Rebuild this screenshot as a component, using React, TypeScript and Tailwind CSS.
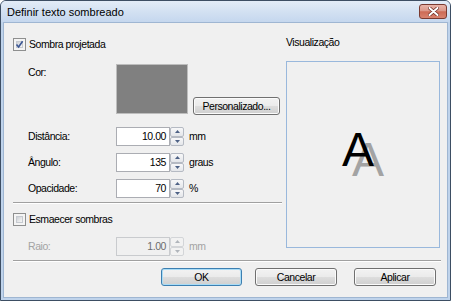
import React from 'react';

const txt = 'text-[10.5px] tracking-[-0.45px] leading-[13px]';

function CheckBox({ checked }: { checked?: boolean }) {
  return (
    <span className="w-[13px] h-[13px] shrink-0 border border-[#8e8f8f] bg-[#f4f4f4] p-[2px] flex">
      <span className="flex-1 flex items-center justify-center bg-[linear-gradient(135deg,#cbcfd5_0%,#e8e9ea_60%,#f6f6f6_100%)] border border-[#c6cad0]">
        {checked && (
          <svg width="9" height="9" viewBox="0 0 9 9" className="-m-[2px]">
            <path d="M1.5 4.5 L3.6 7 L7.6 1.2" fill="none" stroke="#3b5694" strokeWidth="1.6" />
          </svg>
        )}
      </span>
    </span>
  );
}

function Spin({ disabled }: { disabled?: boolean }) {
  const arrow = disabled ? '#b0b5bb' : '#4d6185';
  const half = `flex-1 flex items-center justify-center rounded-[2px] border ${
    disabled ? 'border-[#d3d5d8] bg-[#f2f2f2]' : 'border-[#b5bac3] bg-[linear-gradient(180deg,#f8f8f9_0%,#e4e6ea_100%)]'
  }`;
  return (
    <div className="w-[14px] h-[19px] flex flex-col">
      <div className={half}>
        <svg width="5" height="3" viewBox="0 0 5 3">
          <path d="M0 3 L2.5 0 L5 3Z" fill={arrow} />
        </svg>
      </div>
      <div className={half}>
        <svg width="5" height="3" viewBox="0 0 5 3">
          <path d="M0 0 L2.5 3 L5 0Z" fill={arrow} />
        </svg>
      </div>
    </div>
  );
}

function NumRow({
  label,
  value,
  unit,
  disabled,
  className,
}: {
  label: string;
  value: string;
  unit: string;
  disabled?: boolean;
  className?: string;
}) {
  return (
    <div className={`flex items-center h-[19px] ${className ?? ''}`}>
      <div className={`w-[103px] pl-[15px] ${txt} ${disabled ? 'text-[#a3a3a3]' : ''}`}>{label}</div>
      <div
        className={`w-[54px] h-[19px] border flex items-center justify-end pr-[3px] ${txt} ${
          disabled ? 'border-[#c9cbce] bg-[#f0f0f0] text-[#6d6d6d]' : 'border-[#abadb3] bg-white'
        }`}
      >
        {value}
      </div>
      <Spin disabled={disabled} />
      <div className={`ml-[5px] ${txt} ${disabled ? 'text-[#a3a3a3]' : ''}`}>{unit}</div>
    </div>
  );
}

function Btn({ children, def, className }: { children: React.ReactNode; def?: boolean; className?: string }) {
  return (
    <div
      className={`h-[18px] rounded-[3px] border flex items-center justify-center ${txt} bg-[linear-gradient(180deg,#f2f2f2_0%,#ebebeb_48%,#dddddd_52%,#cfcfcf_100%)] ${
        def
          ? 'border-[#3c7fb1] shadow-[inset_0_0_0_1px_#a9dcf6]'
          : 'border-[#707070] shadow-[inset_0_0_0_1px_#fbfbfb]'
      } ${className ?? ''}`}
    >
      {children}
    </div>
  );
}

export default function App() {
  return (
    <div className="w-[451px] h-[301px] flex flex-col rounded-t-[6px] border border-[#3d4e63] bg-[#bfd3eb] font-['Liberation_Sans',Arial,sans-serif] text-black overflow-hidden">
      {/* Title bar */}
      <div className="h-[21px] shrink-0 flex items-center justify-between pl-[6px] pr-[3px] bg-[linear-gradient(180deg,#e3ecf7_0%,#d3e1f2_50%,#c5d7ee_100%)]">
        <span className="text-[11px] leading-[13px] pt-[1px]">Definir texto sombreado</span>
        <div className="w-[28px] h-[15px] rounded-[3px] border border-[#7a3a30] bg-[linear-gradient(180deg,#e9b4a8_0%,#dc988a_45%,#cd6a55_52%,#d9836f_100%)] flex items-center justify-center">
          <svg width="11" height="9" viewBox="0 0 11 9">
            <path d="M1.5 1 L9.5 8 M9.5 1 L1.5 8" stroke="#6a2a22" strokeWidth="3.4" strokeLinecap="round" />
            <path d="M1.5 1 L9.5 8 M9.5 1 L1.5 8" stroke="#ffffff" strokeWidth="2" strokeLinecap="round" />
          </svg>
        </div>
      </div>

      {/* Client area */}
      <div className="flex-1 mx-[2px] mb-[2px] border border-[#9fb6d2] bg-[#f0f0f0] flex flex-col">
        <div className="flex items-start">
          {/* Left column */}
          <div className="ml-[9px] w-[269px] pt-[15px] flex flex-col">
            <div className="flex items-center h-[13px] gap-[3px]">
              <CheckBox checked />
              <span className={txt}>Sombra projetada</span>
            </div>

            <div className="flex items-start mt-[13px]">
              <div className={`w-[103px] pl-[15px] pt-[2px] ${txt}`}>Cor:</div>
              <div className="w-[72px] h-[50px] border border-[#bdbdbd] bg-[#808080]" />
              <Btn className="ml-[5px] w-[87px] self-end -mb-[1px]">Personalizado...</Btn>
            </div>

            <NumRow className="mt-[13px]" label="Distância:" value="10.00" unit="mm" />
            <NumRow className="mt-[7px]" label="Ângulo:" value="135" unit="graus" />
            <NumRow className="mt-[7px]" label="Opacidade:" value="70" unit="%" />

            <div className="mt-[4px] h-[2px] border-t border-[#a0a0a0] border-b border-b-white" />

            <div className="flex items-center h-[13px] gap-[3px] mt-[9px]">
              <CheckBox />
              <span className={txt}>Esmaecer sombras</span>
            </div>

            <NumRow className="mt-[11px]" label="Raio:" value="1.00" unit="mm" disabled />
          </div>

          {/* Right column */}
          <div className="ml-[4px] pt-[13px] flex flex-col">
            <span className={txt}>Visualização</span>
            <div className="mt-[12px] w-[154px] h-[187px] border border-[#99b8dc] flex items-center justify-center">
              <div className="relative pr-[10px] pb-[10px] mt-[1px]">
                <span aria-hidden className="absolute z-0 left-[10px] top-[10px] text-[48px] leading-[48px] text-[#a3a3a3] select-none">
                  A
                </span>
                <span className="relative z-10 block text-[48px] leading-[48px]">A</span>
              </div>
            </div>
          </div>
        </div>

        <div className="mt-[4px] ml-[9px] mr-[6px] h-[2px] border-t border-[#a0a0a0] border-b border-b-white" />

        <div className="flex mt-[6px] ml-[157px]">
          <Btn def className="w-[81px]">OK</Btn>
          <Btn className="w-[82px] ml-[13px]">Cancelar</Btn>
          <Btn className="w-[82px] ml-[17px]">Aplicar</Btn>
        </div>
      </div>
    </div>
  );
}
